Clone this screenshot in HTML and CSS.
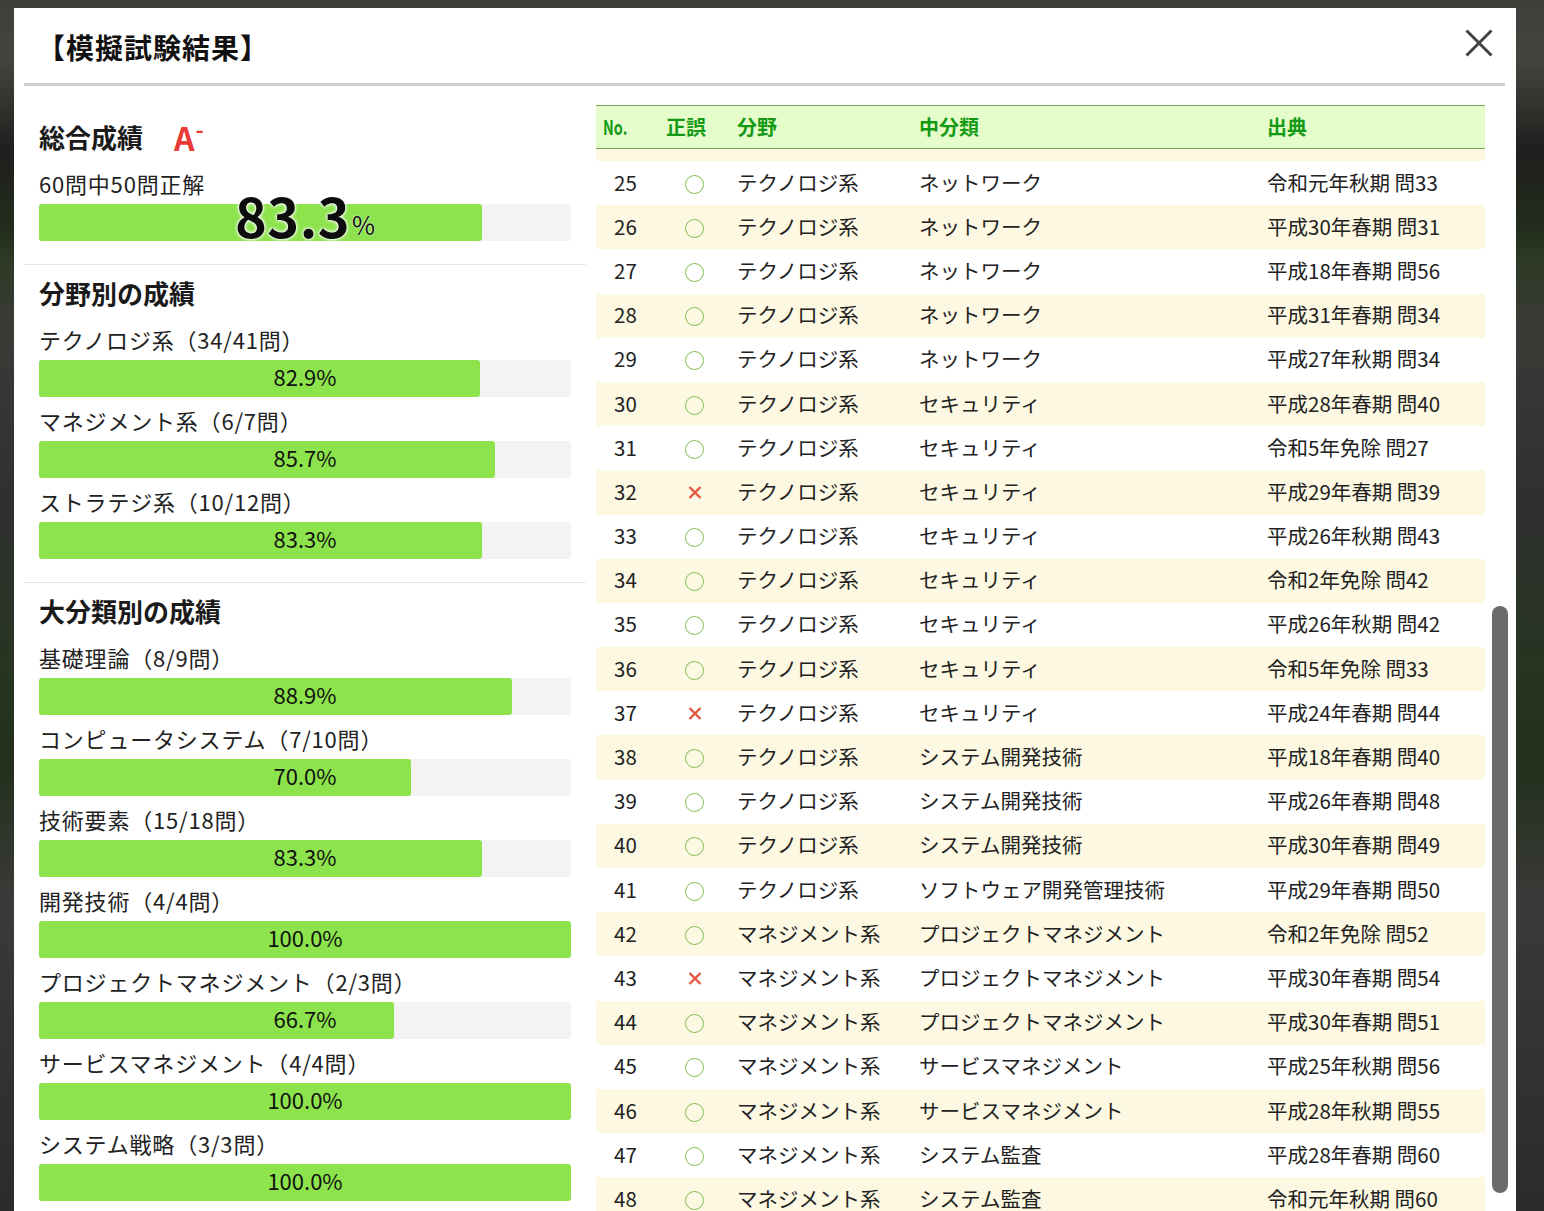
FILE: index.html
```html
<!DOCTYPE html>
<html lang="ja">
<head>
<meta charset="utf-8">
<title>模擬試験結果</title>
<link rel="stylesheet" href="styles.css">
</head>
<body>
<div class="modal">
  <div class="modal-header">
    <h1 class="modal-title">【模擬試験結果】</h1>
    <button class="close-btn" aria-label="閉じる">
      <svg width="28" height="28" viewBox="0 0 28 28"><path d="M1.5 1.5 L26.5 26.5 M26.5 1.5 L1.5 26.5" stroke="#444" stroke-width="3" fill="none"/></svg>
    </button>
  </div>
  <div class="modal-body">
    <div class="summary">
      <section class="section">
        <h2 class="section-title">総合成績<span class="grade">A<sup>-</sup></span></h2>
        <div class="item">
          <div class="item-label">60問中50問正解</div>
          <div class="bar"><div class="fill" style="width:83.3%"></div><div class="bar-text big"><span class="big-num">83.3</span><span class="big-pct">%</span></div></div>
        </div>
      </section>
      <section class="section">
        <h2 class="section-title">分野別の成績</h2>
        <div class="item">
          <div class="item-label">テクノロジ系（34/41問）</div>
          <div class="bar"><div class="fill" style="width:82.9%"></div><div class="bar-text">82.9%</div></div>
        </div>
        <div class="item">
          <div class="item-label">マネジメント系（6/7問）</div>
          <div class="bar"><div class="fill" style="width:85.7%"></div><div class="bar-text">85.7%</div></div>
        </div>
        <div class="item">
          <div class="item-label">ストラテジ系（10/12問）</div>
          <div class="bar"><div class="fill" style="width:83.3%"></div><div class="bar-text">83.3%</div></div>
        </div>
      </section>
      <section class="section">
        <h2 class="section-title">大分類別の成績</h2>
        <div class="item">
          <div class="item-label">基礎理論（8/9問）</div>
          <div class="bar"><div class="fill" style="width:88.9%"></div><div class="bar-text">88.9%</div></div>
        </div>
        <div class="item">
          <div class="item-label">コンピュータシステム（7/10問）</div>
          <div class="bar"><div class="fill" style="width:70%"></div><div class="bar-text">70.0%</div></div>
        </div>
        <div class="item">
          <div class="item-label">技術要素（15/18問）</div>
          <div class="bar"><div class="fill" style="width:83.3%"></div><div class="bar-text">83.3%</div></div>
        </div>
        <div class="item">
          <div class="item-label">開発技術（4/4問）</div>
          <div class="bar"><div class="fill" style="width:100%"></div><div class="bar-text">100.0%</div></div>
        </div>
        <div class="item">
          <div class="item-label">プロジェクトマネジメント（2/3問）</div>
          <div class="bar"><div class="fill" style="width:66.7%"></div><div class="bar-text">66.7%</div></div>
        </div>
        <div class="item">
          <div class="item-label">サービスマネジメント（4/4問）</div>
          <div class="bar"><div class="fill" style="width:100%"></div><div class="bar-text">100.0%</div></div>
        </div>
        <div class="item">
          <div class="item-label">システム戦略（3/3問）</div>
          <div class="bar"><div class="fill" style="width:100%"></div><div class="bar-text">100.0%</div></div>
        </div>
      </section>
    </div>

    <div class="results">
      <div class="row head">
        <div class="cell"><span class="no-label">No.</span></div>
        <div class="cell">正誤</div>
        <div class="cell">分野</div>
        <div class="cell">中分類</div>
        <div class="cell">出典</div>
      </div>
      <div class="rows-view">
        <div class="row even partial"></div>
        <div class="row"><div class="cell num">25</div><div class="cell mark"><span class="ok"></span></div><div class="cell">テクノロジ系</div><div class="cell">ネットワーク</div><div class="cell">令和元年秋期 問33</div></div>
        <div class="row even"><div class="cell num">26</div><div class="cell mark"><span class="ok"></span></div><div class="cell">テクノロジ系</div><div class="cell">ネットワーク</div><div class="cell">平成30年春期 問31</div></div>
        <div class="row"><div class="cell num">27</div><div class="cell mark"><span class="ok"></span></div><div class="cell">テクノロジ系</div><div class="cell">ネットワーク</div><div class="cell">平成18年春期 問56</div></div>
        <div class="row even"><div class="cell num">28</div><div class="cell mark"><span class="ok"></span></div><div class="cell">テクノロジ系</div><div class="cell">ネットワーク</div><div class="cell">平成31年春期 問34</div></div>
        <div class="row"><div class="cell num">29</div><div class="cell mark"><span class="ok"></span></div><div class="cell">テクノロジ系</div><div class="cell">ネットワーク</div><div class="cell">平成27年秋期 問34</div></div>
        <div class="row even"><div class="cell num">30</div><div class="cell mark"><span class="ok"></span></div><div class="cell">テクノロジ系</div><div class="cell">セキュリティ</div><div class="cell">平成28年春期 問40</div></div>
        <div class="row"><div class="cell num">31</div><div class="cell mark"><span class="ok"></span></div><div class="cell">テクノロジ系</div><div class="cell">セキュリティ</div><div class="cell">令和5年免除 問27</div></div>
        <div class="row even"><div class="cell num">32</div><div class="cell mark"><svg class="ng" width="14" height="13" viewBox="0 0 14 13"><path d="M1.5 1 L12.5 12 M12.5 1 L1.5 12" stroke="#e4553f" stroke-width="2.4" fill="none"/></svg></div><div class="cell">テクノロジ系</div><div class="cell">セキュリティ</div><div class="cell">平成29年春期 問39</div></div>
        <div class="row"><div class="cell num">33</div><div class="cell mark"><span class="ok"></span></div><div class="cell">テクノロジ系</div><div class="cell">セキュリティ</div><div class="cell">平成26年秋期 問43</div></div>
        <div class="row even"><div class="cell num">34</div><div class="cell mark"><span class="ok"></span></div><div class="cell">テクノロジ系</div><div class="cell">セキュリティ</div><div class="cell">令和2年免除 問42</div></div>
        <div class="row"><div class="cell num">35</div><div class="cell mark"><span class="ok"></span></div><div class="cell">テクノロジ系</div><div class="cell">セキュリティ</div><div class="cell">平成26年秋期 問42</div></div>
        <div class="row even"><div class="cell num">36</div><div class="cell mark"><span class="ok"></span></div><div class="cell">テクノロジ系</div><div class="cell">セキュリティ</div><div class="cell">令和5年免除 問33</div></div>
        <div class="row"><div class="cell num">37</div><div class="cell mark"><svg class="ng" width="14" height="13" viewBox="0 0 14 13"><path d="M1.5 1 L12.5 12 M12.5 1 L1.5 12" stroke="#e4553f" stroke-width="2.4" fill="none"/></svg></div><div class="cell">テクノロジ系</div><div class="cell">セキュリティ</div><div class="cell">平成24年春期 問44</div></div>
        <div class="row even"><div class="cell num">38</div><div class="cell mark"><span class="ok"></span></div><div class="cell">テクノロジ系</div><div class="cell">システム開発技術</div><div class="cell">平成18年春期 問40</div></div>
        <div class="row"><div class="cell num">39</div><div class="cell mark"><span class="ok"></span></div><div class="cell">テクノロジ系</div><div class="cell">システム開発技術</div><div class="cell">平成26年春期 問48</div></div>
        <div class="row even"><div class="cell num">40</div><div class="cell mark"><span class="ok"></span></div><div class="cell">テクノロジ系</div><div class="cell">システム開発技術</div><div class="cell">平成30年春期 問49</div></div>
        <div class="row"><div class="cell num">41</div><div class="cell mark"><span class="ok"></span></div><div class="cell">テクノロジ系</div><div class="cell">ソフトウェア開発管理技術</div><div class="cell">平成29年春期 問50</div></div>
        <div class="row even"><div class="cell num">42</div><div class="cell mark"><span class="ok"></span></div><div class="cell">マネジメント系</div><div class="cell">プロジェクトマネジメント</div><div class="cell">令和2年免除 問52</div></div>
        <div class="row"><div class="cell num">43</div><div class="cell mark"><svg class="ng" width="14" height="13" viewBox="0 0 14 13"><path d="M1.5 1 L12.5 12 M12.5 1 L1.5 12" stroke="#e4553f" stroke-width="2.4" fill="none"/></svg></div><div class="cell">マネジメント系</div><div class="cell">プロジェクトマネジメント</div><div class="cell">平成30年春期 問54</div></div>
        <div class="row even"><div class="cell num">44</div><div class="cell mark"><span class="ok"></span></div><div class="cell">マネジメント系</div><div class="cell">プロジェクトマネジメント</div><div class="cell">平成30年春期 問51</div></div>
        <div class="row"><div class="cell num">45</div><div class="cell mark"><span class="ok"></span></div><div class="cell">マネジメント系</div><div class="cell">サービスマネジメント</div><div class="cell">平成25年秋期 問56</div></div>
        <div class="row even"><div class="cell num">46</div><div class="cell mark"><span class="ok"></span></div><div class="cell">マネジメント系</div><div class="cell">サービスマネジメント</div><div class="cell">平成28年秋期 問55</div></div>
        <div class="row"><div class="cell num">47</div><div class="cell mark"><span class="ok"></span></div><div class="cell">マネジメント系</div><div class="cell">システム監査</div><div class="cell">平成28年春期 問60</div></div>
        <div class="row even"><div class="cell num">48</div><div class="cell mark"><span class="ok"></span></div><div class="cell">マネジメント系</div><div class="cell">システム監査</div><div class="cell">令和元年秋期 問60</div></div>
      </div>
    </div>
  </div>
  <div class="scroll-thumb"></div>
</div>
</body>
</html>
```

FILE: styles.css
```css
html, body {
  height: 100%;
}
body {
  margin: 0;
  overflow: hidden;
  padding: 8px 0 0 14px;
  box-sizing: border-box;
  font-family: "Noto Sans CJK JP", "Noto Sans", sans-serif;
  color: #222;
  background:
    linear-gradient(180deg, #3e3e3b 0px, #45453f 60px, #1f1f1e 150px, #232d1c 230px, #2e3a25 260px, #3a3a37 330px, #303030 500px, #263520 680px, #22301c 760px, #3a3a38 900px, #2b2b2b 1211px);
}

.modal {
  position: relative;
  width: 1502px;
  height: 1240px;
  background: #fff;
  display: flex;
  flex-direction: column;
}

.modal-header {
  display: flex;
  align-items: center;
  height: 78px;
  margin: 0 11px 0 10px;
  padding: 3px 0 0 16px;
  box-sizing: border-box;
  border-bottom: 3px solid #cccccc;
  flex: none;
}
.modal-title {
  margin: 0 0 0 -3px;
  font-size: 28px;
  font-weight: 700;
  line-height: 36px;
  letter-spacing: 1px;
  color: #111;
}
.close-btn {
  margin-left: auto;
  margin-right: 12px;
  align-self: flex-start;
  margin-top: 18px;
  padding: 0;
  border: 0;
  background: transparent;
  width: 28px;
  height: 28px;
  display: block;
}
.close-btn svg { display: block; }

.modal-body {
  display: flex;
  gap: 10px;
  padding: 19px 0 0 10px;
  flex: 1;
  min-height: 0;
}

/* left summary */
.summary {
  width: 562px;
  flex: none;
}
.section {
  padding: 10px 15px 13px;
  border-bottom: 1px solid #e6e6e6;
}
.section:first-child {
  padding-top: 14px;
}
.section:last-child {
  border-bottom: 0;
}
.section-title {
  margin: 0 0 15px;
  height: 36px;
  font-size: 26px;
  font-weight: 700;
  line-height: 36px;
  color: #1a1a1a;
  white-space: nowrap;
}
.grade {
  display: inline-block;
  margin-left: 31px;
  color: #e83a36;
  font-size: 32px;
  font-weight: 700;
  line-height: 36px;
  vertical-align: top;
}
.grade sup {
  font-size: 22px;
  font-weight: 700;
  vertical-align: top;
  line-height: 18px;
  margin-left: 1px;
}
.item {
  margin-bottom: 10px;
}
.item-label {
  font-size: 22px;
  line-height: 26px;
  padding-bottom: 4px;
  letter-spacing: 0.8px;
  color: #222;
  white-space: nowrap;
}
.bar {
  position: relative;
  margin-top: 4px;
  height: 37px;
  background: #f3f3f3;
  border-radius: 3px;
}
.fill {
  height: 100%;
  background: #8ce34c;
  border-radius: 3px;
}
.bar-text {
  position: absolute;
  inset: 0;
  display: flex;
  justify-content: center;
  align-items: center;
  font-size: 22px;
  line-height: 33px;
  padding-bottom: 4px;
  color: #111;
}
.bar-text.big {
  padding-bottom: 0;
  line-height: 37px;
}
.big-num {
  font-size: 54px;
  font-weight: 700;
  line-height: 37px;
  margin-top: -16px;
  color: #0c0c0c;
  text-shadow: 0 0 2px #fff, 0 0 3px #fff, 0 0 4px #fff;
  letter-spacing: 0.5px;
}
.big-pct {
  font-size: 25px;
  line-height: 37px;
  align-self: flex-end;
  margin-bottom: -2px;
  margin-left: 2px;
  color: #111;
  text-shadow: 0 0 2px #fff;
}

/* right results table */
.results {
  width: 889px;
  flex: none;
  display: flex;
  flex-direction: column;
  min-height: 0;
}
.row {
  display: grid;
  grid-template-columns: 63px 71px 182px 348px 1fr;
  align-items: center;
  height: 44.2px;
  font-size: 20.5px;
  color: #222;
  background: #fff;
}
.row.even {
  background: #fcf8e1;
}
.row.partial {
  height: 12px;
}
.row.head {
  height: 44px;
  box-sizing: border-box;
  background: #e5fccb;
  border-top: 1px solid #7da55c;
  border-bottom: 1px solid #7da55c;
  color: #159a15;
  font-weight: 700;
  font-size: 20px;
  flex: none;
}
.cell {
  padding-left: 7px;
  white-space: nowrap;
  line-height: 30px;
}
.rows-view .cell {
  padding-bottom: 3px;
}
.no-label {
  display: inline-block;
  transform: scaleX(0.72);
  transform-origin: left center;
}
.rows-view .cell.num {
  padding-left: 18px;
}
.rows-view .cell.mark {
  padding: 0;
  display: flex;
  justify-content: center;
  align-items: center;
}
.ok {
  display: block;
  width: 19px;
  height: 19px;
  box-sizing: border-box;
  border: 1.6px solid #80bd4e;
  border-radius: 50%;
  margin-top: 2px;
}
.ng {
  display: block;
  margin-top: 1px;
}
.rows-view {
  flex: 1;
  min-height: 0;
  overflow: hidden;
}

.scroll-thumb {
  position: absolute;
  left: 1478px;
  top: 598px;
  width: 16px;
  height: 587px;
  border-radius: 8px;
  background: #6b6b6b;
}
```
